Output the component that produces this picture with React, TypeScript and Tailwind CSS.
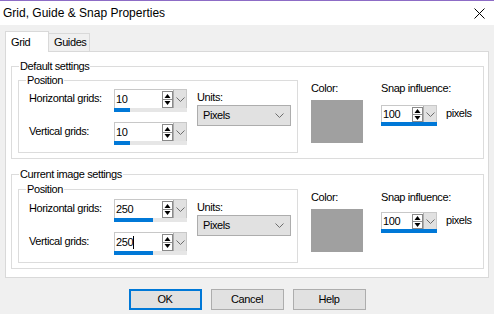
import React from 'react'

const FONT = "font-['Liberation_Sans',Arial,sans-serif]"

function Chevron() {
  return (
    <svg width="9" height="5" viewBox="0 0 9 5">
      <path d="M0.5 0.5 L4.5 4.5 L8.5 0.5" fill="none" stroke="#6d6d6d" strokeWidth="1" />
    </svg>
  )
}

function Arrows({ h }: { h: number }) {
  const mid = Math.floor(h / 2)
  return (
    <svg width="11" height={h} viewBox={`0 0 11 ${h}`}>
      <rect x="0.5" y="0.5" width="10" height={h - 1} fill="#fff" stroke="#8a8a8a" />
      <line x1="1" y1={mid + 0.5} x2="10" y2={mid + 0.5} stroke="#8a8a8a" />
      <path d={`M2.5 ${mid - 1} L8.5 ${mid - 1} L5.5 ${mid - 5} Z`} fill="#000" />
      <path d={`M2.5 ${mid + 2} L8.5 ${mid + 2} L5.5 ${mid + 6} Z`} fill="#000" />
    </svg>
  )
}

interface SpinProps {
  value: string
  fill: number
  caret?: boolean
  small?: boolean
}

function SpinBox({ value, fill, caret = false, small = false }: SpinProps) {
  return (
    <div className={`flex flex-col ${small ? 'w-[56px]' : 'w-[73px]'}`}>
      <div
        className={`flex border border-b-0 border-[#c8c8c8] bg-white ${
          small ? 'h-[17px]' : 'h-[19px]'
        }`}
      >
        <div className="flex flex-1 items-center pl-[1px] text-[11px] text-black">
          {value}
          {caret && <span className="inline-block h-[13px] w-px bg-black" />}
        </div>
        <div className="flex items-center">
          <Arrows h={small ? 15 : 17} />
        </div>
        <div className="flex w-[13px] items-center justify-center border-l border-[#adadad] bg-[#e1e1e1]">
          <Chevron />
        </div>
      </div>
      <div className="h-[4px] bg-[#e6e6e6]">
        <div className="h-full bg-[#0078d7]" style={{ width: `${fill}%` }} />
      </div>
    </div>
  )
}

function Field({ label, children }: { label: string; children: React.ReactNode }) {
  return (
    <div className="flex items-start">
      <span className="h-[19px] w-[85px] leading-[19px]">{label}</span>
      {children}
    </div>
  )
}

interface GroupProps {
  title: string
  values: [string, string]
  fills: [number, number]
  caret?: boolean
  className?: string
  loose?: boolean
}

function Group({ title, values, fills, caret, className = '', loose = false }: GroupProps) {
  return (
    <fieldset className={`ml-[5px] mr-[4px] border border-[#dcdcdc] pb-[5px] pl-[6px] ${className}`}>
      <legend className="ml-[1px] px-[1px] leading-[14px]">{title}</legend>
      <div className="flex items-start">
        <fieldset
          className={`w-[279px] border border-[#dcdcdc] pb-[7px] pl-[10px] pr-[6px] ${
            loose ? 'mt-[1px]' : ''
          }`}
        >
          <legend className="-ml-[3px] px-[1px] leading-[14px]">Position</legend>
          <div className={`flex gap-[10px] ${loose ? 'pt-[3px]' : 'pt-[2px]'}`}>
            <div className="flex flex-col gap-[10px]">
              <Field label="Horizontal grids:">
                <SpinBox value={values[0]} fill={fills[0]} />
              </Field>
              <Field label="Vertical grids:">
                <SpinBox value={values[1]} fill={fills[1]} caret={caret} />
              </Field>
            </div>
            <div className="flex flex-col pt-[1px]">
              <span className="leading-[14px]">Units:</span>
              <div className="mt-[1px] flex h-[21px] w-[94px] items-center justify-between border border-[#adadad] bg-[#e1e1e1] pl-[5px] pr-[6px]">
                <span>Pixels</span>
                <Chevron />
              </div>
            </div>
          </div>
        </fieldset>
        <div className={`ml-[13px] flex flex-col ${loose ? 'mt-[9px]' : 'mt-[8px]'}`}>
          <span className="leading-[14px]">Color:</span>
          <div className="mt-[5px] h-[43px] w-[52px] bg-[#a0a0a0]" />
        </div>
        <div className={`ml-[18px] flex flex-col ${loose ? 'mt-[9px]' : 'mt-[8px]'}`}>
          <span className="leading-[14px]">Snap influence:</span>
          <div className={`flex items-start ${loose ? 'mt-[8px]' : 'mt-[10px]'}`}>
            <SpinBox value="100" fill={100} small />
            <span className="ml-[9px] leading-[17px]">pixels</span>
          </div>
        </div>
      </div>
    </fieldset>
  )
}

export default function App() {
  return (
    <div
      className={`flex h-[314px] w-[494px] flex-col overflow-hidden border-t border-[#8d6cc6] bg-[#f0f0f0] text-[11px] tracking-[-0.4px] text-black ${FONT}`}
    >
      <div className="flex h-[24px] items-center justify-between bg-white pl-[3px] pr-[9px]">
        <span className="text-[12px] tracking-normal">Grid, Guide &amp; Snap Properties</span>
        <svg width="11" height="11" viewBox="0 0 11 11">
          <path d="M0.5 0.5 L10.5 10.5 M10.5 0.5 L0.5 10.5" stroke="#000" strokeWidth="1" />
        </svg>
      </div>

      <div className="mt-[6px] flex h-[20px] items-end pl-[5px]">
        <div className="relative z-10 -mb-px flex h-[21px] w-[44px] items-center border border-b-0 border-[#d9d9d9] bg-white pl-[5px]">
          Grid
        </div>
        <div className="-ml-px flex h-[18px] w-[42px] items-center border border-b-0 border-[#d9d9d9] bg-[#f0f0f0] pl-[5px]">
          Guides
        </div>
      </div>

      <div className="ml-[5px] h-[227px] w-[484px] border border-[#d9d9d9] bg-white pt-[7px]">
        <Group title="Default settings" values={['10', '10']} fills={[22, 22]} />
        <Group
          title="Current image settings"
          values={['250', '250']}
          fills={[53, 53]}
          caret
          loose
          className="mt-[8px]"
        />
      </div>

      <div className="mt-[11px] flex justify-center gap-[9px]">
        <button
          type="button"
          className="h-[21px] w-[73px] border-2 border-[#0078d7] bg-[#e1e1e1]"
        >
          OK
        </button>
        <button type="button" className="h-[21px] w-[73px] border border-[#adadad] bg-[#e1e1e1]">
          Cancel
        </button>
        <button type="button" className="h-[21px] w-[73px] border border-[#adadad] bg-[#e1e1e1]">
          Help
        </button>
      </div>
    </div>
  )
}
